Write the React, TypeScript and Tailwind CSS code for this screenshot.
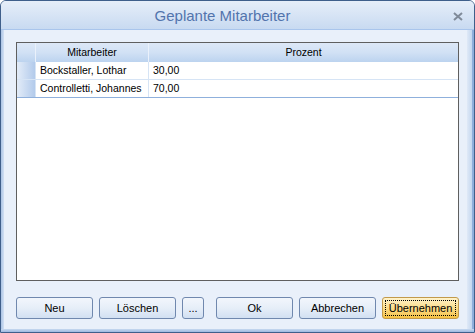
import React from 'react'

type Row = { name: string; percent: string }

const rows: Row[] = [
  { name: 'Bockstaller, Lothar', percent: '30,00' },
  { name: 'Controlletti, Johannes', percent: '70,00' },
]

const DialogButton: React.FC<{ label: string; width: string; active?: boolean }> = ({ label, width, active }) => {
  if (active) {
    return (
      <button className={`${width} h-[22px] rounded-[3px] border border-[#c29a4c] bg-gradient-to-b from-[#fff3cb] via-[#fbdc8a] to-[#f6c140] p-[2px]`}>
        <span className="flex h-full w-full items-center justify-center border border-dotted border-black text-[11px] text-black">
          {label}
        </span>
      </button>
    )
  }
  return (
    <button
      className={`${width} h-[22px] rounded-[3px] border border-[#7088ae] bg-gradient-to-b from-[#f2f6fc] via-[#e6eef8] to-[#d2e0f2] text-[11px] text-black`}
    >
      {label}
    </button>
  )
}

const App: React.FC = () => {
  return (
    <div className="w-[475px] h-[333px] font-['Liberation_Sans',Arial,sans-serif] overflow-hidden">
      <div className="flex h-full w-full flex-col rounded-t-[6px] border border-[#3f5f8b] bg-[#e9f0fa]">
        {/* Title bar */}
        <div className="flex h-[28px] items-center rounded-t-[5px] bg-gradient-to-b from-[#e6eef9] to-[#c8daf1]">
          <div className="w-[10px]" />
          <div className="flex-1 pt-[3px] text-center text-[15px] text-[#5274ad]">Geplante Mitarbeiter</div>
          <div className="flex w-[40px] justify-end pr-[11px] pt-[2px]">
            <svg width="10" height="9" viewBox="0 0 10 9">
              <path d="M1 1 L9 8 M9 1 L1 8" stroke="#7f8a99" strokeWidth="2" />
            </svg>
          </div>
        </div>
        <div className="h-px bg-[#a9c5ec]" />

        {/* Body */}
        <div className="flex flex-1">
          <div className="w-[3px] bg-gradient-to-r from-[#aac3e4] to-[#d3e1f4]" />
          <div className="flex flex-1 flex-col pl-[12px] pr-[8px] pt-[12px] pb-[10px]">
            {/* Grid */}
            <div className="h-[239px] border border-[#5f5f5f] bg-white">
              <div className="flex h-[19px] bg-gradient-to-b from-[#dde8f7] via-[#d1e1f5] to-[#bcd3ef] text-[10.5px] text-black">
                <div className="w-[19px] border-r border-[#eaf1fb]" />
                <div className="flex w-[113px] items-center justify-center border-r border-[#eaf1fb]">Mitarbeiter</div>
                <div className="flex flex-1 items-center justify-center">Prozent</div>
              </div>
              {rows.map((r, i) => (
                <div
                  key={r.name}
                  className={`flex h-[18px] border-b text-[10.5px] text-black ${
                    i === rows.length - 1 ? 'border-[#8fb0dc]' : 'border-[#d6e4f5]'
                  }`}
                >
                  <div className="w-[19px] border-r border-[#d6e4f5] bg-gradient-to-r from-[#e3ecf8] to-[#b2caeb]" />
                  <div className="flex w-[113px] items-center border-r border-[#d6e4f5] pl-[4px]">{r.name}</div>
                  <div className="flex flex-1 items-center pl-[4px]">{r.percent}</div>
                </div>
              ))}
            </div>

            {/* Buttons */}
            <div className="mt-[16px] flex h-[22px] items-center">
              <DialogButton label="Neu" width="w-[77px]" />
              <div className="w-[6px]" />
              <DialogButton label="Löschen" width="w-[77px]" />
              <div className="w-[6px]" />
              <DialogButton label="..." width="w-[22px]" />
              <div className="w-[12px]" />
              <DialogButton label="Ok" width="w-[77px]" />
              <div className="w-[6px]" />
              <DialogButton label="Abbrechen" width="w-[77px]" />
              <div className="w-[6px]" />
              <DialogButton label="Übernehmen" width="w-[77px]" active />
            </div>
          </div>
          <div className="flex w-[7px]">
            <div className="flex-1 bg-gradient-to-r from-[#dfe9f7] to-[#c4d7ef]" />
            <div className="w-[2px] bg-[#8eaedb]" />
          </div>
        </div>
        <div className="h-[3px] bg-gradient-to-b from-[#c7d9f0] to-[#9db9e0]" />
      </div>
    </div>
  )
}

export default App
